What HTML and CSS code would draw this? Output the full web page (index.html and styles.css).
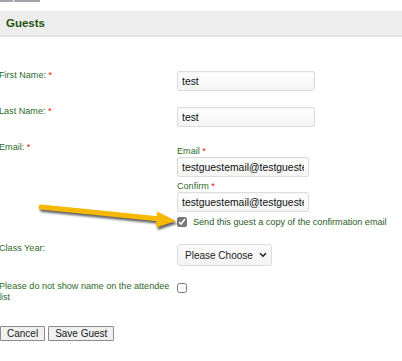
FILE: index.html
```html
<!DOCTYPE html>
<html lang="en">
<head>
<meta charset="utf-8">
<title>Guests</title>
<link rel="stylesheet" href="styles.css">
</head>
<body>
<div class="topbar"><span class="tb tb1"></span><span class="tb tb2"></span></div>
<h2 class="section-head">Guests</h2>
<form class="guest-form">
  <div class="row">
    <label class="field-label">First Name: <span class="req">*</span></label>
    <div class="field-value"><input class="text-input" type="text" value="test"></div>
  </div>
  <div class="row">
    <label class="field-label">Last Name: <span class="req">*</span></label>
    <div class="field-value"><input class="text-input" type="text" value="test"></div>
  </div>
  <div class="row">
    <label class="field-label">Email: <span class="req">*</span></label>
    <div class="field-value email-stack">
      <label class="sub-label">Email <span class="req">*</span></label>
      <input class="text-input email-input" type="text" value="testguestemail@testguestemail.com">
      <label class="sub-label confirm-label">Confirm <span class="req">*</span></label>
      <input class="text-input email-input" type="text" value="testguestemail@testguestemail.com">
      <label class="check-line"><input class="check checked" type="checkbox" checked> <span>Send this guest a copy of the confirmation email</span></label>
    </div>
  </div>
  <div class="row row-class">
    <label class="field-label">Class Year:</label>
    <div class="field-value">
      <span class="select-wrap">
        <select class="select-input"><option>Please Choose</option></select>
        <svg class="chev" width="8" height="6" viewBox="0 0 8 6" aria-hidden="true"><path d="M1 1.2 L4 4.2 L7 1.2" fill="none" stroke="#222" stroke-width="1.6"/></svg>
      </span>
    </div>
  </div>
  <div class="row row-hide">
    <label class="field-label">Please do not show name on the attendee list</label>
    <div class="field-value"><input class="check" type="checkbox"></div>
  </div>
  <div class="actions">
    <button type="button" class="btn">Cancel</button>
    <button type="button" class="btn">Save Guest</button>
  </div>
</form>
<svg class="annotation" width="402" height="361" viewBox="0 0 402 361" aria-hidden="true">
  <defs>
    <filter id="blur" x="-10%" y="-50%" width="120%" height="200%"><feGaussianBlur stdDeviation="1"/></filter>
  </defs>
  <g transform="translate(1.5,2.5)" fill="#222" stroke="#222" opacity="0.7" filter="url(#blur)">
    <line x1="41" y1="207" x2="160" y2="219" stroke-width="5" stroke-linecap="round"/>
    <polygon points="157,211.5 176,221 156,227.5" stroke="none"/>
  </g>
  <g fill="#f6b800" stroke="#f6b800">
    <line x1="41" y1="207" x2="160" y2="219" stroke-width="5" stroke-linecap="round"/>
    <polygon points="157,211.5 176,221 156,227.5" stroke="none"/>
  </g>
</svg>
</body>
</html>
```

FILE: styles.css
```css
html, body {
  margin: 0;
  padding: 0;
  background: #ffffff;
}
body {
  position: relative;
  width: 402px;
  height: 361px;
  overflow: hidden;
  font-family: "Liberation Sans", Arial, sans-serif;
}
.topbar {
  display: flex;
  height: 2px;
  margin-bottom: 9px;
}
.tb {
  display: block;
  height: 2px;
  background: #a4a4ac;
}
.tb1 { width: 13px; }
.tb2 { width: 26px; margin-left: 1px; }

.section-head {
  margin: 0;
  height: 24px;
  line-height: 24px;
  padding-left: 6px;
  background: #eeeeee;
  border-bottom: 2px solid #e3e3e3;
  font-size: 11.5px;
  font-weight: bold;
  color: #1d5412;
}

.guest-form {
  padding-top: 33px;
  display: flex;
  flex-direction: column;
  gap: 15px;
}
.row {
  display: grid;
  grid-template-columns: 177px 1fr;
  align-items: start;
}
.field-label {
  margin-left: -1px;
  padding-right: 6px;
  font-size: 9.1px;
  line-height: 11px;
  color: #2e6a2a;
}
.req {
  color: #ee1111;
}
.field-value {
  padding-top: 1px;
}
.text-input {
  box-sizing: border-box;
  display: block;
  width: 138px;
  height: 20px;
  margin: 0;
  padding: 0 4px;
  border: 1px solid #dcdcdc;
  border-radius: 2px;
  background: linear-gradient(#ffffff, #f4f4f4);
  box-shadow: inset 0 1px 1px rgba(0,0,0,0.04);
  font-family: "Liberation Sans", Arial, sans-serif;
  font-size: 10.4px;
  color: #111;
  outline: none;
}
.email-stack {
  padding-top: 4px;
  display: flex;
  flex-direction: column;
}
.email-input {
  width: 132px;
}
.sub-label {
  font-size: 9.1px;
  line-height: 11px;
  color: #2e6a2a;
}
.confirm-label {
  margin-top: 4px;
}
.check-line {
  margin-top: 3px;
  display: flex;
  align-items: center;
  gap: 6px;
  height: 13px;
  font-size: 9.1px;
  color: #2a5a26;
  white-space: nowrap;
}
.check {
  width: 10px;
  height: 10px;
  margin: 0;
  display: block;
}
.check.checked {
  accent-color: #777777;
}
.row-class .field-value {
  padding-top: 1px;
}
.select-wrap {
  position: relative;
  display: inline-block;
}
.select-input {
  box-sizing: border-box;
  display: block;
  width: 95px;
  height: 22px;
  margin: 0;
  padding: 0 14px 0 7px;
  border: 1px solid #dddddd;
  border-radius: 3px;
  background: linear-gradient(#fbfbfb, #f3f3f3);
  font-family: "Liberation Sans", Arial, sans-serif;
  font-size: 10px;
  color: #222;
  -webkit-appearance: none;
  appearance: none;
}
.chev {
  position: absolute;
  right: 5px;
  top: 8px;
  pointer-events: none;
}
.row-hide .field-value {
  padding-top: 1.5px;
}
.actions {
  margin-top: 8px;
  display: flex;
  gap: 3px;
}
.btn {
  box-sizing: border-box;
  height: 15px;
  margin: 0;
  padding: 0 6px;
  border: 1px solid #8c8c8c;
  border-radius: 1px;
  background: #f0f0f0;
  font-family: "Liberation Sans", Arial, sans-serif;
  font-size: 10px;
  line-height: 13px;
  color: #1a1a1a;
}
.annotation {
  position: absolute;
  left: 0;
  top: 0;
  pointer-events: none;
}
```
